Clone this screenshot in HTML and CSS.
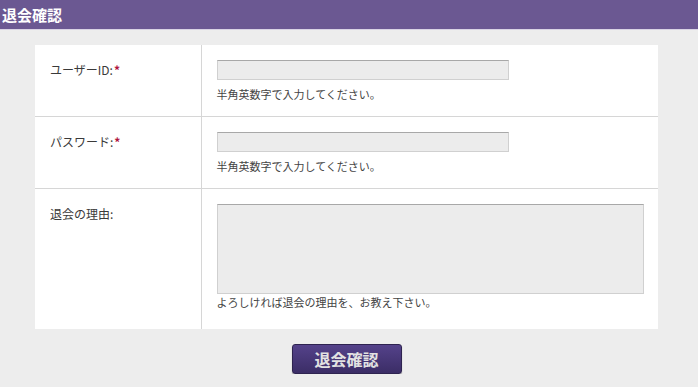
FILE: index.html
```html
<!DOCTYPE html>
<html>
<head lang="ja">
    <meta charset="UTF-8">
    <title>退会確認</title>
    <link rel="stylesheet" href="styles.css">
</head>
<body>
<h1 class="title">退会確認</h1>
<form id="withdraw">
    <table class="form-table">
        <tr>
            <th>ユーザーID:<span class="req">*</span></th>
            <td>
                <input type="text" class="text">
                <p class="note">半角英数字で入力してください。</p>
            </td>
        </tr>
        <tr>
            <th>パスワード:<span class="req">*</span></th>
            <td>
                <input type="password" class="text">
                <p class="note">半角英数字で入力してください。</p>
            </td>
        </tr>
        <tr class="last">
            <th>退会の理由:</th>
            <td>
                <textarea class="reason"></textarea>
                <p class="note">よろしければ退会の理由を、お教え下さい。</p>
            </td>
        </tr>
    </table>
    <div class="buttons">
        <button type="button" class="submit">退会確認</button>
    </div>
</form>
</body>
</html>
```
FILE: styles.css
```css
*{
    margin: 0;
    padding: 0;
    box-sizing: border-box;
}
body{
    background: #ededed;
    font-family: "Noto Sans CJK JP", "Liberation Sans", sans-serif;
    font-size: 12px;
    color: #333333;
}
.title{
    height: 30px;
    line-height: 30px;
    background: #6b5892;
    border-bottom: 1px solid #d9d3e4;
    color: #ffffff;
    font-size: 15px;
    font-weight: bold;
    padding-left: 2px;
}
#withdraw{
    width: 623px;
    margin: 15px 0 0 35px;
}
.form-table{
    width: 100%;
    border-collapse: collapse;
    background: #ffffff;
}
.form-table th,.form-table td{
    vertical-align: top;
    text-align: left;
    font-weight: normal;
    border-bottom: 1px solid #d6d6d6;
}
.form-table th{
    width: 166px;
    padding: 17px 15px 0 15px;
    line-height: 16px;
    border-right: 1px solid #d6d6d6;
    color: #3a3a3a;
}
.form-table td{
    padding: 15px 14px 14px 15px;
}
.form-table .last th,.form-table .last td{
    border-bottom: none;
}
.form-table .last td{
    padding-bottom: 19px;
}
.req{
    color: #b0143c;
    font-weight: bold;
    margin-left: 1px;
}
.text{
    display: block;
    width: 292px;
    height: 20px;
    margin-bottom: 6px;
    background: #ececec;
    border: 1px solid #d0d0d0;
    border-top-color: #a8a8a8;
    outline: none;
}
.reason{
    display: block;
    width: 427px;
    height: 90px;
    background: #ececec;
    border: 1px solid #d0d0d0;
    border-top-color: #a8a8a8;
    resize: none;
    outline: none;
}
.note{
    line-height: 16px;
    font-size: 11px;
    color: #444444;
}
.buttons{
    text-align: center;
    padding-top: 15px;
}
.submit{
    width: 110px;
    height: 30px;
    border: 1px solid #2e2350;
    border-radius: 3px;
    background: linear-gradient(#54428a, #3b2d66);
    box-shadow: 0 1px 1px rgba(0,0,0,0.35);
    color: #e2e2e2;
    font-family: "Noto Sans CJK JP", sans-serif;
    font-size: 16px;
    font-weight: bold;
    cursor: pointer;
}
```
